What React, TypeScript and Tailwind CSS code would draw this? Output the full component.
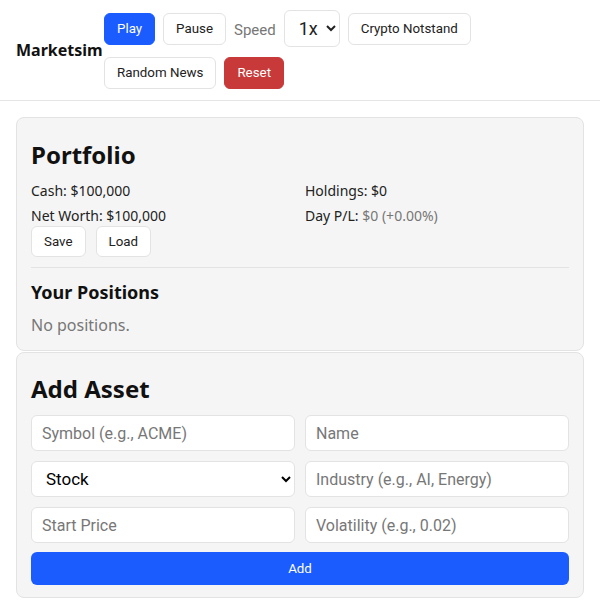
import React, { useState } from 'react';

const btn =
  'h-8 px-3 rounded-md border border-[#e3e3e3] bg-white text-[13.33px] text-[#222] font-["Roboto",sans-serif]';

const smallBtn =
  'h-[31px] px-3 rounded-md border border-[#e3e3e3] bg-white text-[13.33px] text-[#222] font-["Roboto",sans-serif]';

const field =
  'h-9 w-full rounded-md border border-[#e3e3e3] bg-white px-[10px] text-base text-[#222] placeholder:text-[#777] font-["Roboto",sans-serif] outline-none';

const App: React.FC = () => {
  const [speed, setSpeed] = useState('1x');
  const [kind, setKind] = useState('Stock');

  return (
    <div className='min-h-[600px] bg-white font-["Noto_Sans",sans-serif] text-[#222]'>
      {/* Top bar */}
      <header className="flex items-center border-b border-[#e5e5e5] px-4 pt-[10px] pb-[11px]">
        <div className="w-[88px] shrink-0 text-base font-bold text-[#111]">Marketsim</div>
        <div className="flex flex-1 flex-wrap items-center gap-x-2 gap-y-[10px]">
          <button className='h-8 px-3 rounded-md border border-[#1a5cff] bg-[#1a5cff] text-[13.33px] text-white font-["Roboto",sans-serif]'>
            Play
          </button>
          <button className={btn}>Pause</button>
          <span className='mt-[4px] text-[15px] text-[#777] font-["Roboto",sans-serif]'>Speed</span>
          <select
            value={speed}
            onChange={(e) => setSpeed(e.target.value)}
            className='h-[37px] rounded-md border border-[#e3e3e3] bg-white pl-2.5 pr-1 text-lg text-[#222] font-["Roboto",sans-serif]'
          >
            <option>1x</option>
            <option>2x</option>
            <option>5x</option>
          </select>
          <button className={btn}>Crypto Notstand</button>
          <button className={btn}>Random News</button>
          <button className='h-8 px-3 rounded-md border border-[#c83a3a] bg-[#c83a3a] text-[13.33px] text-white font-["Roboto",sans-serif]'>
            Reset
          </button>
        </div>
      </header>

      <main className="flex flex-col gap-px px-4 pt-4">
        {/* Portfolio */}
        <section className="rounded-lg border border-[#e3e3e3] bg-[#f5f5f5] px-[14px] pt-[15px] pb-[13px]">
          <h2 className="mt-1.5 text-2xl leading-8 font-bold text-[#111]">Portfolio</h2>
          <div className="mt-[7px] grid grid-cols-2 gap-x-2.5 text-sm">
            <div className="leading-[25px]">Cash: $100,000</div>
            <div className="leading-[25px]">Holdings: $0</div>
            <div className="leading-[25px]">Net Worth: $100,000</div>
            <div className="leading-[25px]">
              Day P/L: <span className="text-[#777]">$0 (+0.00%)</span>
            </div>
          </div>
          <div className="-mt-[2px] flex gap-2.5">
            <button className={smallBtn}>Save</button>
            <button className={smallBtn}>Load</button>
          </div>
          <div className="mt-[10px] border-t border-[#e3e3e3]" />
          <h3 className="mt-2.5 text-lg leading-7 font-bold text-[#111]">Your Positions</h3>
          <p className="mt-[7px] text-base leading-6 text-[#777]">No positions.</p>
        </section>

        {/* Add asset form */}
        <section className="rounded-lg border border-[#e3e3e3] bg-[#f5f5f5] px-[14px] pt-[15px] pb-3">
          <h2 className="mt-[5px] text-2xl leading-8 font-bold text-[#111]">Add Asset</h2>
          <div className="mt-[10px] grid grid-cols-2 gap-x-2.5 gap-y-[10px]">
            <input className={field} placeholder="Symbol (e.g., ACME)" />
            <input className={field} placeholder="Name" />
            <select
              value={kind}
              onChange={(e) => setKind(e.target.value)}
              className='h-9 w-full rounded-md border border-[#e3e3e3] bg-white pl-[10px] pr-1 text-[17px] text-black font-["Roboto",sans-serif]'
            >
              <option>Stock</option>
              <option>Crypto</option>
              <option>ETF</option>
            </select>
            <input className={field} placeholder="Industry (e.g., AI, Energy)" />
            <input className={field} placeholder="Start Price" />
            <input className={field} placeholder="Volatility (e.g., 0.02)" />
          </div>
          <button className='mt-[9px] h-[33px] w-full rounded-md bg-[#1a5cff] text-[13.33px] text-white font-["Roboto",sans-serif]'>
            Add
          </button>
        </section>
      </main>
    </div>
  );
};

export default App;
